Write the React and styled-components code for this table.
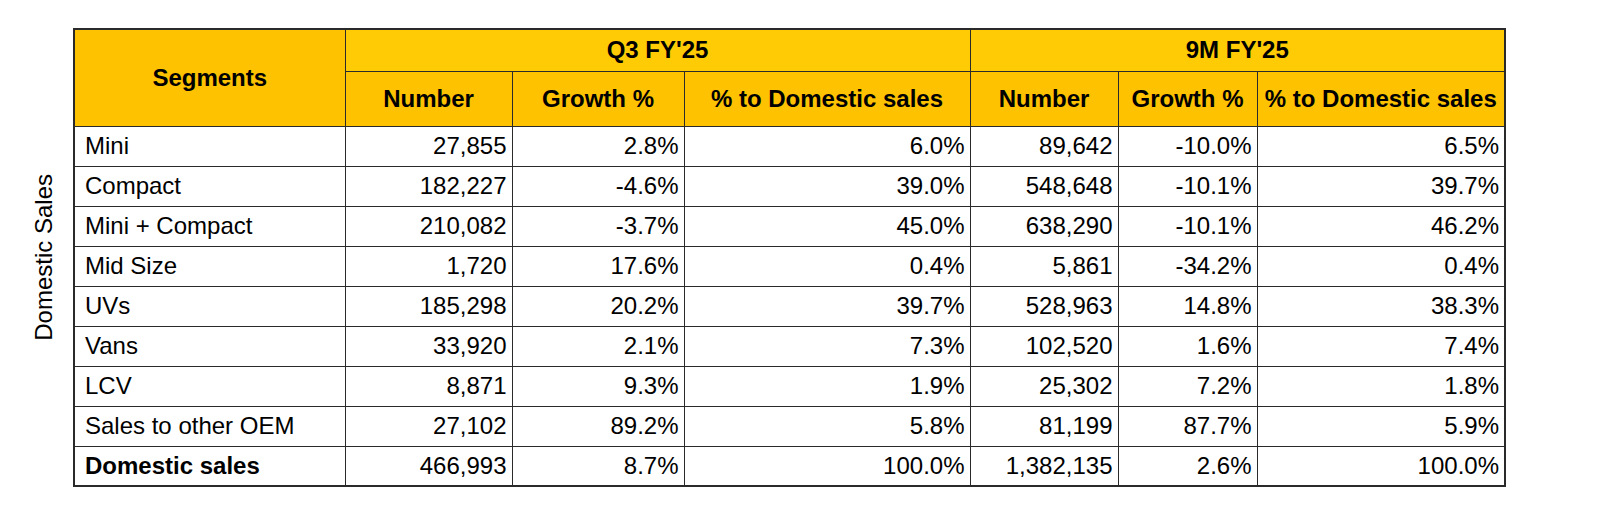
import React from 'react';
import styled, { createGlobalStyle } from 'styled-components';

const GlobalStyle = createGlobalStyle`
  html, body {
    margin: 0;
    padding: 0;
    background: #ffffff;
  }
  body {
    font-family: "Liberation Sans", Arial, sans-serif;
    color: #000;
  }
`;

const columns = [271, 167, 172, 286, 148, 139, 248];

const groups = ["Q3 FY'25", "9M FY'25"];
const subHeads = ['Number', 'Growth %', '% to Domestic sales'];

const rows = [
  { name: 'Mini', values: ['27,855', '2.8%', '6.0%', '89,642', '-10.0%', '6.5%'] },
  { name: 'Compact', values: ['182,227', '-4.6%', '39.0%', '548,648', '-10.1%', '39.7%'] },
  { name: 'Mini + Compact', values: ['210,082', '-3.7%', '45.0%', '638,290', '-10.1%', '46.2%'] },
  { name: 'Mid Size', values: ['1,720', '17.6%', '0.4%', '5,861', '-34.2%', '0.4%'] },
  { name: 'UVs', values: ['185,298', '20.2%', '39.7%', '528,963', '14.8%', '38.3%'] },
  { name: 'Vans', values: ['33,920', '2.1%', '7.3%', '102,520', '1.6%', '7.4%'] },
  { name: 'LCV', values: ['8,871', '9.3%', '1.9%', '25,302', '7.2%', '1.8%'] },
  { name: 'Sales to other OEM', values: ['27,102', '89.2%', '5.8%', '81,199', '87.7%', '5.9%'] },
  { name: 'Domestic sales', values: ['466,993', '8.7%', '100.0%', '1,382,135', '2.6%', '100.0%'], total: true },
];

const Page = styled.div`
  display: flex;
  align-items: center;
  gap: 16px;
  padding: 28px 0 0 30px;
`;

const SideLabel = styled.div`
  writing-mode: vertical-rl;
  transform: rotate(180deg);
  font-size: 24px;
  line-height: 27px;
  width: 27px;
  white-space: nowrap;
`;

const Table = styled.table`
  border-collapse: collapse;
  table-layout: fixed;
  width: 1431px;
  border: 2px solid #2a2a2a;
  font-size: 24px;
`;

const HeadRow = styled.tr`
  height: ${(p) => p.$h}px;
`;

const HeadCell = styled.th`
  background: ${(p) => (p.$light ? '#ffcb05' : '#fec200')};
  border: 1px solid #2a2a2a;
  font-weight: 700;
  text-align: center;
  vertical-align: middle;
  padding: 0 6px;
  white-space: nowrap;
`;

const BodyRow = styled.tr`
  height: 40px;
`;

const NameCell = styled.td`
  border: 1px solid #2a2a2a;
  padding: 0 10px;
  text-align: left;
  font-weight: ${(p) => (p.$bold ? 700 : 400)};
  white-space: nowrap;
`;

const ValueCell = styled.td`
  border: 1px solid #2a2a2a;
  padding: 0 5px;
  text-align: right;
  white-space: nowrap;
`;

export default function App() {
  return (
    <>
      <GlobalStyle />
      <Page>
        <SideLabel>Domestic Sales</SideLabel>
        <Table>
          <colgroup>
            {columns.map((w, i) => (
              <col key={i} style={{ width: w }} />
            ))}
          </colgroup>
          <thead>
            <HeadRow $h={42}>
              <HeadCell rowSpan={2}>Segments</HeadCell>
              {groups.map((g) => (
                <HeadCell key={g} colSpan={3} $light>
                  {g}
                </HeadCell>
              ))}
            </HeadRow>
            <HeadRow $h={55}>
              {groups.map((g) =>
                subHeads.map((s) => <HeadCell key={g + s}>{s}</HeadCell>)
              )}
            </HeadRow>
          </thead>
          <tbody>
            {rows.map((r) => (
              <BodyRow key={r.name}>
                <NameCell $bold={r.total}>{r.name}</NameCell>
                {r.values.map((v, i) => (
                  <ValueCell key={i}>{v}</ValueCell>
                ))}
              </BodyRow>
            ))}
          </tbody>
        </Table>
      </Page>
    </>
  );
}
